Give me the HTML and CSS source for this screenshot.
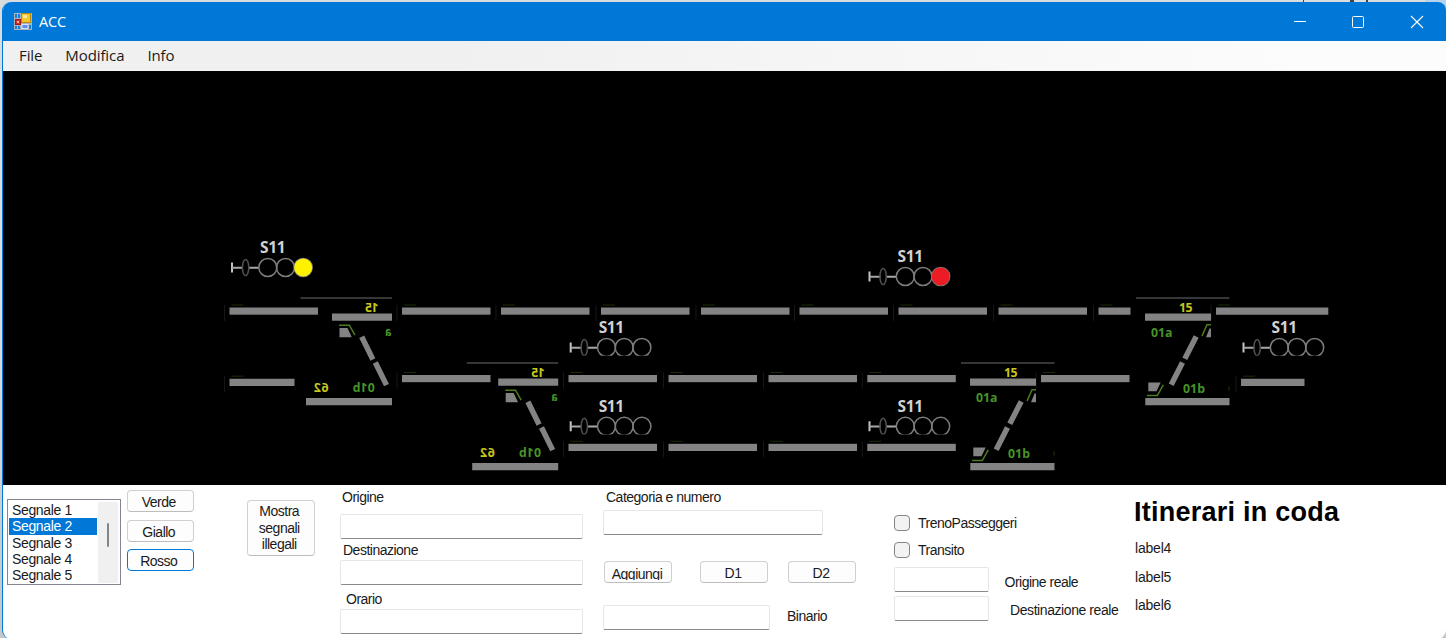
FILE: index.html
```html
<!DOCTYPE html>
<html lang="it">
<head>
<meta charset="utf-8">
<title>ACC</title>
<link rel="stylesheet" href="styles.css">
</head>
<body>
<div class="window">
  <header class="titlebar">
    <svg class="app-icon" width="18" height="18" viewBox="0 0 18 18">
      <rect width="18" height="17" fill="#a9b4bd"/>
      <path d="M1 1h2v4H1zM4 1h2v4H4zM1 13h2v3H1zM4 13h2v3H4zM15 12h2v4h-2z" fill="#1b7fd6"/>
      <rect x="7.500" y="0.500" width="9" height="9" fill="#f7c62c" stroke="#b98a10"/>
      <rect x="9" y="2" width="4" height="3" fill="#ffec9a"/>
      <rect x="1.500" y="6.500" width="5" height="5" fill="#d22c2c" stroke="#a01818"/>
      <rect x="3" y="8" width="2" height="2" fill="#ffb0a8"/>
      <rect x="8" y="11.500" width="6" height="4" fill="#5f8fee" stroke="#d5e2fa"/>
    </svg>
    <span class="title">ACC</span>
    <svg class="controls" width="140" height="20" viewBox="0 0 140 20" fill="none" stroke="#fff">
      <path d="M4 9.500h12"/>
      <rect x="62.500" y="4.500" width="11" height="11" rx="1"/>
      <path d="M121 4l12 12M133 4l-12 12" stroke-width="1.100"/>
    </svg>
  </header>
  <nav class="menu">
    <span class="m-file">File</span><span class="m-edit">Modifica</span><span class="m-info">Info</span>
  </nav>
  <svg class="board" width="1443" height="414" viewBox="3 71 1443 414">
    <defs>
      <clipPath id="flat"><rect x="225" y="235" width="95" height="40.800"/></clipPath>
      <g id="signal">
        <text class="sig" x="260" y="252.900" textLength="25.500">S11</text>
        <path d="M232 262.500v10" stroke="#c4c4c4" stroke-width="2"/>
        <path d="M232 267.700h11M249 267.700h10" stroke="#a8a8a8" stroke-width="2"/>
        <g fill="none" stroke="#7c7c7c" stroke-width="1.500">
          <ellipse cx="245.600" cy="267.500" rx="3.200" ry="8" stroke="#505050"/>
          <circle cx="267.800" cy="267.500" r="9"/>
          <circle cx="285.500" cy="267.500" r="9"/>
          <circle cx="303.200" cy="267.500" r="9"/>
        </g>
      </g>
      <g id="marks">
        <path d="M-5 -2.500v16" stroke="#161616"/>
        <path d="M2 -2.500h12" stroke="#1b2d05"/>
      </g>
      <g id="track">
        <use href="#marks"/>
        <rect width="88.500" height="7.200" fill="#838383"/>
      </g>
      <g id="switch-l">
        <path d="M300.500 298h91.500" stroke="#484848" stroke-width="1.500"/>
        <path d="M332 313.500h60v7.200h-60zM306 398h86v7.200h-86z" fill="#838383"/>
        <path d="M339.500 328h8l4.300 9.300h-12.300z" fill="#838383"/>
        <path d="M339 325.200h10.300l5.700 10" fill="none" stroke="#4d7d1c" stroke-width="1.500"/>
        <path d="M361.700 336.700l11.200 22.800M375.300 362.500l11.200 22.600" stroke="#838383" stroke-width="5.500"/>
        <g transform="scale(-1 1)">
          <text class="num" x="-378.500" y="311.500" textLength="13.500">15</text>
          <text class="num" x="-328.500" y="392.200" textLength="14.500">62</text>
          <text class="pt" x="-391.500" y="336.200" textLength="6.500" lengthAdjust="spacingAndGlyphs">a</text>
          <text class="pt" x="-374.700" y="392.200" textLength="22">01b</text>
        </g>
      </g>
      <g id="switch-r">
        <path d="M961 363h93.500" stroke="#484848" stroke-width="1.500"/>
        <path d="M970 378.500h66v7.200h-66zM970.300 463h84.200v7.200h-84.200z" fill="#838383"/>
        <path d="M973.300 447.500h12.400l-4.200 8.700h-8.200zM1036 393.500v8.800h-5l3.500-8.800z" fill="#838383"/>
        <path d="M972 460.500h10.300l6-10.700M1027 401l5-11.200h4" fill="none" stroke="#4d7d1c" stroke-width="1.500"/>
        <path d="M1021.200 401.500l-11.400 22.300M1007.500 427.500l-11.300 22.300" stroke="#838383" stroke-width="5.500"/>
        <text class="num" x="1004" y="376.500" textLength="13.500">15</text>
        <text class="pt" x="976" y="401.500" textLength="21.500">01a</text>
        <text class="pt" x="1008" y="457.500" textLength="22">01b</text>
        <path d="M1054 451.500v4" stroke="#26340a"/>
      </g>
    </defs>
    <rect x="3" y="71" width="1443" height="414" fill="#000"/>

    <use href="#track" x="229.500" y="307.500"/>
    <use href="#track" x="402" y="307.500"/>
    <use href="#track" x="501" y="307.500"/>
    <use href="#track" x="601" y="307.500"/>
    <use href="#track" x="701" y="307.500"/>
    <use href="#track" x="799.500" y="307.500"/>
    <use href="#track" x="898.500" y="307.500"/>
    <use href="#track" x="998.500" y="307.500"/>
    <use href="#marks" x="1098.500" y="307.500"/>
    <use href="#marks" x="1216" y="307.500"/>
    <use href="#marks" x="229.500" y="378.700"/>
    <use href="#marks" x="1241" y="378.700"/>
    <path fill="#838383" d="M1098.500 307.500h32v7.200h-32zM1216 307.500h112.300v7.200H1216zM229.500 378.700h65v7.200h-65zM1241 378.700h63.500v7.200H1241z"/>

    <use href="#track" x="402" y="375"/>
    <use href="#track" x="568.500" y="375"/>
    <use href="#track" x="668.500" y="375"/>
    <use href="#track" x="768.500" y="375"/>
    <use href="#track" x="867.300" y="375"/>
    <use href="#track" x="1041" y="375"/>

    <use href="#track" x="568.500" y="443.800"/>
    <use href="#track" x="668.500" y="443.800"/>
    <use href="#track" x="768.500" y="443.800"/>
    <use href="#track" x="867.300" y="443.800"/>

    <use href="#switch-l"/>
    <use href="#switch-l" x="166.200" y="65"/>
    <use href="#switch-r"/>
    <use href="#switch-r" x="175" y="-65"/>

    <use href="#signal"/>
    <circle cx="303.200" cy="267.500" r="9" fill="#fff200"/>
    <use href="#signal" x="637.500" y="9"/>
    <circle cx="940.700" cy="276.500" r="9" fill="#ed1c24"/>
    <g transform="translate(338.700 80)"><use href="#signal" clip-path="url(#flat)"/></g>
    <g transform="translate(338.700 158.800)"><use href="#signal" clip-path="url(#flat)"/></g>
    <g transform="translate(637.500 158.800)"><use href="#signal" clip-path="url(#flat)"/></g>
    <g transform="translate(1011.500 80)"><use href="#signal" clip-path="url(#flat)"/></g>
  </svg>

  <main class="panel">
    <div class="listbox">
      <ul>
        <li>Segnale 1</li><li class="selected">Segnale 2</li><li>Segnale 3</li><li>Segnale 4</li><li>Segnale 5</li>
      </ul>
      <div class="scrollbar"><div class="thumb"></div></div>
    </div>
    <div class="colors">
      <button>Verde</button>
      <button>Giallo</button>
      <button class="focus">Rosso</button>
    </div>
    <button class="show">Mostra<br>segnali<br>illegali</button>
    <div class="route">
      <label class="l-origin">Origine</label><input type="text">
      <label class="l-dest">Destinazione</label><input type="text">
      <label class="l-time">Orario</label><input type="text">
    </div>
    <div class="train">
      <label class="l-cat">Categoria e numero</label>
      <input class="cat" type="text">
      <div class="actions">
        <button class="add"><span>Aggiungi</span></button><button class="d1">D1</button><button class="d2">D2</button>
      </div>
      <div class="platform"><input type="text"><label>Binario</label></div>
    </div>
    <div class="options">
      <div class="check"><i class="box"></i><label class="l-pass">TrenoPasseggeri</label></div>
      <div class="check"><i class="box"></i><label>Transito</label></div>
      <div class="real r1"><input type="text"><label class="l-real">Origine reale</label></div>
      <div class="real"><input type="text"><label class="l-realdest">Destinazione reale</label></div>
    </div>
    <div class="queue">
      <h1>Itinerari in coda</h1>
      <p>label4</p><p>label5</p><p>label6</p>
    </div>
  </main>
</div>
</body>
</html>
```
FILE: styles.css
```css
* { box-sizing: border-box; }

body {
  margin: 0;
  width: 1446px;
  height: 638px;
  overflow: hidden;
  padding: 2px 0 0 2px;
  background:
    linear-gradient(#444, #444) 1303px 0 / 1px 2px no-repeat,
    linear-gradient(#444, #444) 1350px 0 / 4px 2px no-repeat,
    linear-gradient(#444, #444) 1366px 0 / 2px 2px no-repeat,
    linear-gradient(#b5d3ee, #b5d3ee) 1425px 0 / 21px 20px no-repeat,
    linear-gradient(#d9dcdd 0, #d9dcdd 300px, #c4c6c8 638px);
  font: 14px/16px "Liberation Sans", Arial, sans-serif;
  letter-spacing: -0.5px;
  color: #1a1a1a;
}

.window {
  width: 1444px;
  height: 637px;
  border-left: 1px solid #0078d7;
  border-radius: 9px 8px 9px 9px;
  overflow: hidden;
  background: #fff;
}

.titlebar {
  height: 39px;
  display: flex;
  align-items: center;
  padding: 0 16px 0 11px;
  background: #0078d7;
  color: #fff;
}
.title {
  margin-left: 7px;
  font: 14.5px/20px "Open Sans", sans-serif;
  letter-spacing: -0.2px;
}
.controls { margin-left: auto; }

.menu {
  height: 30px;
  display: flex;
  align-items: center;
  padding: 0 0 2px 16px;
  background: linear-gradient(90deg, #f0f0f0, #f0f0f0 30%, #fcfcfc 90%);
  border-bottom: 1px solid #f5f5f5;
  font: 15px/20px "Open Sans", sans-serif;
  letter-spacing: -0.1px;
}
.menu span { margin-right: 23px; }

.board { display: block; }
.sig { font: 700 15.5px "Open Sans", sans-serif; fill: #d2d2d2; letter-spacing: 0; }
.num { font: 700 12.3px "Open Sans", sans-serif; fill: #c6c61c; letter-spacing: 0; }
.pt { font: 700 12.3px "Open Sans", sans-serif; fill: #479327; letter-spacing: 0; }

.panel { display: flex; align-items: flex-start; height: 153px; }

.listbox {
  display: flex;
  width: 113.5px;
  height: 86px;
  margin: 14px 0 0 4px;
  padding: 2px 2px 1px 1px;
  border: 1px solid #82878f;
}
.listbox ul { flex: 1; margin: 0; padding: 0; list-style: none; }
.listbox li { height: 16.3px; line-height: 16.3px; padding-left: 3px; letter-spacing: -0.35px; }
.listbox .selected { background: #0078d7; color: #fff; }
.scrollbar { width: 20px; margin-left: 1px; padding: 21px 0 0 9px; background: #f0f0f0; }
.thumb { width: 2px; height: 24px; border-radius: 1px; background: #858585; }

button {
  display: block;
  width: 68px;
  height: 22px;
  margin: 0;
  padding: 2px 0 0;
  border: 1px solid #d0d0d0;
  border-bottom-color: #bdbdbd;
  border-radius: 4px;
  background: #fdfdfd;
  font: inherit;
  letter-spacing: inherit;
  color: inherit;
  overflow: hidden;
}
.colors { display: grid; gap: 7.5px; margin: 5px 0 0 6px; }
.colors button { width: 67.500px; padding-right: 3px; }
.colors .focus { border: 1.500px solid #0078d7; }
.show { width: 67.500px; height: 56px; margin: 15px 0 0 53px; padding: 0 3px 0 0; line-height: 16.5px; }

input {
  display: block;
  width: 243px;
  height: 25px;
  padding: 0;
  border: 1px solid #e6e6e6;
  border-bottom: 1px solid #8a8a8a;
  border-radius: 2px;
  background: #fff;
}
label { display: block; white-space: nowrap; }

.route { margin: 4px 0 0 25px; }
.l-origin { padding-left: 2.5px; }
.route input { margin-top: 9px; }
.l-dest { padding-left: 3.5px; margin-top: 3px; }
.route .l-dest + input { margin-top: 2px; }
.l-time { padding-left: 6.5px; margin-top: 6px; }
.route .l-time + input { margin-top: 2px; }

.train { width: 291px; margin: 4px 0 0 20.5px; }
.l-cat { padding-left: 3px; }
.train .cat { width: 220px; margin-top: 5px; }
.actions { display: flex; margin: 26px 0 0 1px; }
.add { padding-right: 2px; }
.add span { display: block; height: 13.500px; overflow: hidden; }
.d1 { margin-left: 28px; padding-right: 2px; }
.d2 { margin-left: 20px; padding-right: 2px; }
.platform { display: flex; align-items: center; margin-top: 22px; }
.platform input { width: 167px; margin-right: 17px; }
.platform label { margin-top: -3px; }

.options { width: 240px; margin-top: 29px; }
.check { display: flex; align-items: center; height: 17px; margin-bottom: 10.8px; }
.box {
  width: 16px;
  height: 16px;
  margin-right: 8px;
  border: 1px solid #868686;
  border-radius: 4px;
  background: #f3f3f3;
}
.real { display: flex; align-items: center; margin-top: 4px; }
.real.r1 { margin-top: -2.500px; }
.real input { width: 95px; }
.l-real { margin: 4px 0 0 15.5px; }
.l-realdest { margin: 2px 0 0 21px; letter-spacing: -0.42px; }

.queue { margin-top: 11px; }
.queue h1 { margin: 0 0 12.3px; font-size: 27px; line-height: 32px; letter-spacing: 0.25px; color: #000; }
.queue p { margin: 0 0 12.3px 1px; letter-spacing: -0.2px; }
```
